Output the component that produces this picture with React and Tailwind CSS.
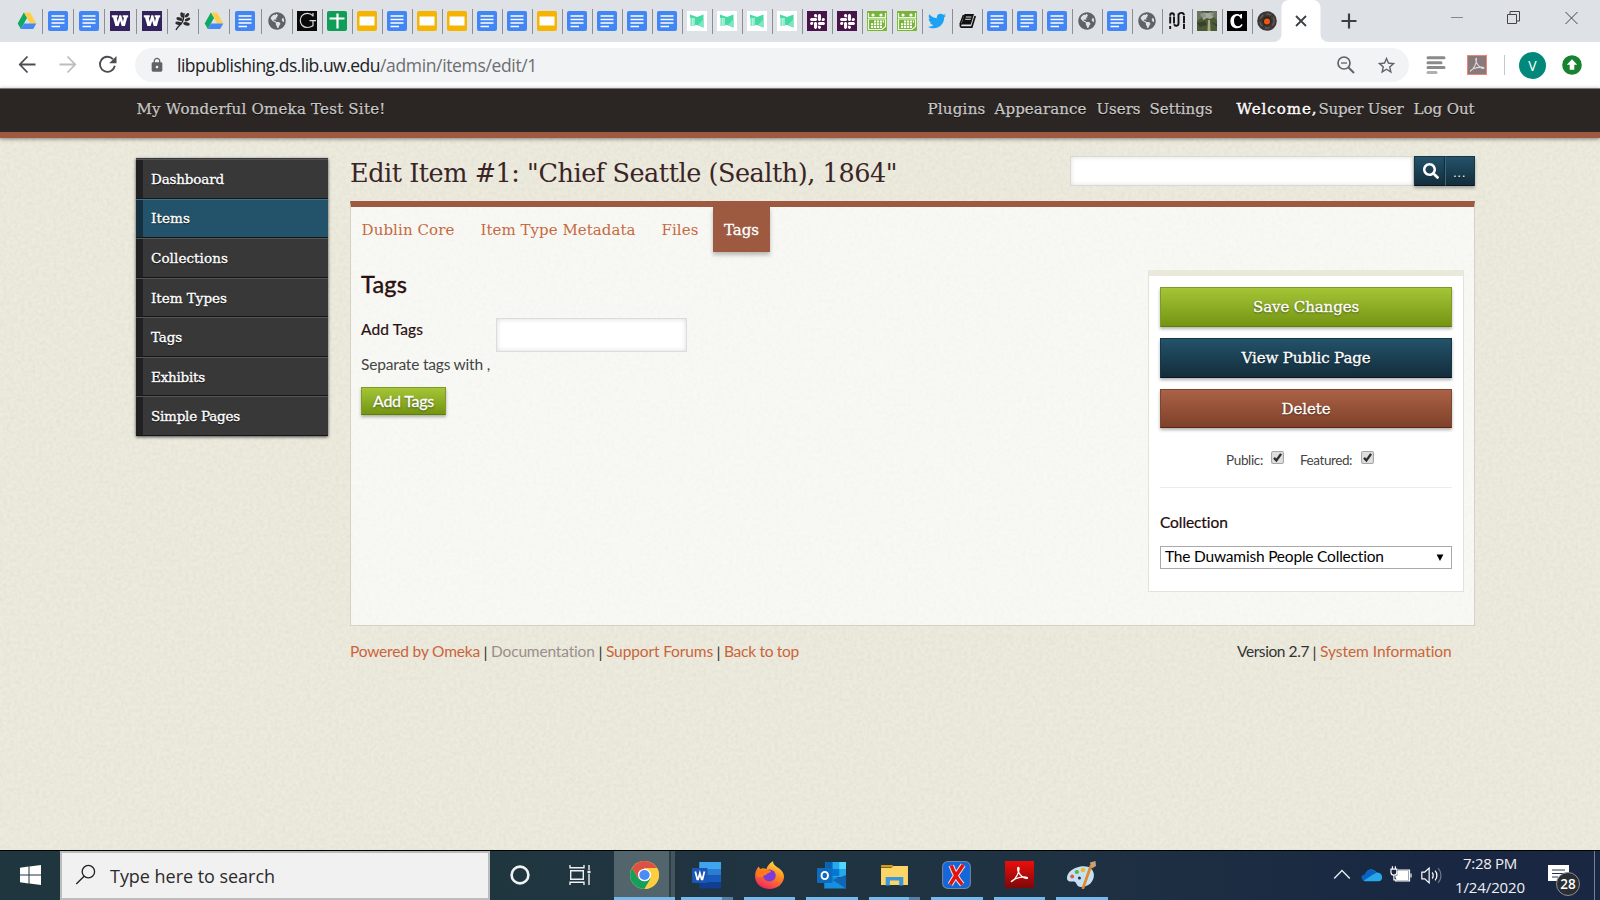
import { useLayoutEffect, useRef, useState } from "react";
import { FaTwitter, FaSlack, FaSearch, FaGlobeAmericas } from "react-icons/fa";
import { MdLock, MdStarBorder } from "react-icons/md";

const SLAB = "font-['DejaVu_Serif',serif]";
const CABIN = "font-['Lato',sans-serif]";
const SEGOE = "font-['Open_Sans','Noto_Sans',sans-serif]";

/* One line of text, tracked so that it fills the width w. */
function Fit({ w, className = "", children }) {
  const ref = useRef(null);
  const [ls, setLs] = useState(0);
  useLayoutEffect(() => {
    const natural = ref.current.getBoundingClientRect().width;
    setLs((w - natural) / String(children).length);
  }, [w, children]);
  return (
    <span className={"block shrink-0 whitespace-pre " + className} style={{ width: w }}>
      <span ref={ref} className="inline-block" style={{ letterSpacing: ls + "px" }}>
        {children}
      </span>
    </span>
  );
}

function Grain({ id, opacity }) {
  return (
    <svg className="pointer-events-none absolute inset-0 h-full w-full" style={{ opacity }}>
      <filter id={id}>
        <feTurbulence type="fractalNoise" baseFrequency="0.28" numOctaves="3" seed="4" />
        <feColorMatrix values="0 0 0 0 0.4  0 0 0 0 0.36  0 0 0 0 0.25  1.6 0 0 0 -0.5" />
      </filter>
      <rect width="100%" height="100%" filter={`url(#${id})`} />
    </svg>
  );
}

/* ---------- favicons ---------- */
const Ico = ({ children }) => (
  <svg viewBox="0 0 20 20" className="block h-5 w-5 shrink-0">
    {children}
  </svg>
);

const favicons = {
  drive: (
    <Ico>
      <path d="M6.8 1.5H13l6.3 11h-6.2z" fill="#ffcf48" />
      <path d="M6.8 1.5 10 7 3.8 18 .7 12.500z" fill="#11a861" />
      <path d="M7 12.500h12.300L16.200 18H3.800z" fill="#4688f4" />
    </Ico>
  ),
  docs: (
    <Ico>
      <rect width="20" height="20" rx="2" fill="#4285f4" />
      <path d="M3.500 5h13M3.500 8.500h13M3.500 12h13M3.500 15.500h8.500" stroke="#fff" strokeWidth="1.700" />
    </Ico>
  ),
  w: (
    <Ico>
      <rect width="20" height="20" fill="#32235c" />
      <path
        d="M1.800 4.300h6v2L6.800 6.500l.9 4.300 1.600-6.500h2l1.700 6.500.9-4.300-1.200-.2v-2h5.500v2l-1 .2L14.900 15h-3.200l-1.500-5.200L8.700 15H5.400L3 6.500l-1.200-.2z"
        fill="#fff"
      />
    </Ico>
  ),
  branch: (
    <Ico>
      <path d="M3 19c1-3 3-4 5-6 2.500-3 3-7 3-11" stroke="#222" strokeWidth="1.300" fill="none" />
      <g fill="#2c2c2c">
        <ellipse cx="9" cy="4" rx="1.600" ry="2.900" transform="rotate(-15 9 4)" />
        <ellipse cx="14" cy="4.300" rx="1.500" ry="2.700" transform="rotate(50 14 4.300)" />
        <ellipse cx="6.500" cy="8" rx="1.600" ry="3.200" transform="rotate(-70 6.500 8)" />
        <ellipse cx="14.500" cy="8.500" rx="1.500" ry="3" transform="rotate(65 14.500 8.500)" />
        <ellipse cx="5.500" cy="12.300" rx="1.600" ry="3.200" transform="rotate(-80 5.500 12.300)" />
        <ellipse cx="13.500" cy="12.800" rx="1.700" ry="3.300" transform="rotate(-78 13.500 12.800)" />
      </g>
    </Ico>
  ),
  globe: <FaGlobeAmericas className="h-[18px] w-[18px] text-[#5f6368]" />,
  g: (
    <Ico>
      <rect width="20" height="20" fill="#0a0a0a" />
      <path d="M16 5.500V2M16 5C14.500 3 12.500 2.300 10.500 2.300 6 2.300 3.300 5.500 3.300 9.500s2.800 7 7 7c2.200 0 4-.6 5.700-1.700v-5M12.500 9.700H19" stroke="#ddd" strokeWidth="1.200" fill="none" />
    </Ico>
  ),
  sheets: (
    <Ico>
      <rect width="20" height="20" rx="2" fill="#0f9d58" />
      <path d="M10.500 2.500v15M2.500 7.500h15" stroke="#fff" strokeWidth="2.200" />
    </Ico>
  ),
  slides: (
    <Ico>
      <rect width="20" height="20" rx="2" fill="#f4b400" />
      <rect x="2.500" y="5.500" width="15" height="9" fill="#fff" />
    </Ico>
  ),
  mint: (
    <Ico>
      <rect width="20" height="20" fill="#fff" />
      <path d="M3 3.500 10 6l6.500-2.500v13L10 14l-7 .5z" fill="#46dba5" />
      <path d="M3 7h5v8l-5-.5z" fill="#b4f0da" />
      <path d="M4.500 6.500v8M7 6.500v8.500" stroke="#74e3bb" strokeWidth=".9" />
      <path d="M11 14l5.500-6v8.500z" fill="#7fe6c1" />
    </Ico>
  ),
  slack: (
    <span className="flex h-5 w-5 shrink-0 items-center justify-center bg-[#481449] text-white">
      <FaSlack className="h-[17px] w-[17px]" />
    </span>
  ),
  cal: (
    <Ico>
      <rect width="20" height="20" rx="1" fill="#77b436" />
      <path d="M1.500 2v4.500h17V2" stroke="#eef8e0" strokeWidth="1.200" fill="none" />
      <circle cx="6" cy="4" r="1.600" fill="#fff" />
      <circle cx="14" cy="4" r="1.600" fill="#fff" />
      <path d="M1.500 8v10.500h13.500l3.500-3V8z" stroke="#eef8e0" strokeWidth="1.200" fill="none" />
      <path d="M7 10.500h10M4 13.300h11M4 16h11" stroke="#fff" strokeWidth="2" strokeDasharray="2.200 .8" />
    </Ico>
  ),
  twitter: <FaTwitter className="h-[18px] w-[18px] text-[#1da1f2]" />,
  book: (
    <Ico>
      <path d="M7.500 3h9.500l-3.200 10.500H4.300z" fill="#111" />
      <path d="M4.800 12.500c-2 .5-1.800 3.500-.3 3.700h10.300L18.200 5" fill="none" stroke="#111" strokeWidth="1.700" />
      <path d="M6.500 4 3 13.500" fill="none" stroke="#111" strokeWidth="1.600" />
      <path d="M8.800 6h5.600M8.200 8.300h5.600" stroke="#ddd" strokeWidth="1" />
    </Ico>
  ),
  m: (
    <Ico>
      <path d="M3.200 18v-3M3.200 12.500V4.500C3.200 1.500 7 1.500 7 4.500v8c0 3 4.500 3 4.500 0v-8c0-3.500 5.500-3.500 5.500 0V18M11.500 2.500v10" stroke="#111" strokeWidth="1.900" fill="none" strokeDasharray="7 .7" />
    </Ico>
  ),
  photo: (
    <Ico>
      <rect width="20" height="20" fill="#4d5a36" />
      <path d="M5 2h9l3 4-4 2-3-1-4 2z" fill="#a3aa9f" />
      <path d="M0 0h5L4 7 0 10zM15 0h5v9l-4-4z" fill="#6c7560" />
      <path d="M3 3 8 1 9 6 5 7zM12 1l5 1-2 4z" fill="#8d968a" />
      <path d="M11 9h2l.5 11h-3z" fill="#a9ab80" />
      <path d="M0 12l8-2 2 4-7 2zM14 11l6 2v3z" fill="#35432a" />
    </Ico>
  ),
  c: (
    <Ico>
      <rect width="20" height="20" fill="#000" />
      <path d="M15 3v4.500h-1.500C13 5.500 12 4.700 10.500 4.700 8 4.700 7 7 7 10s1.300 5.200 3.700 5.200c1.700 0 2.800-.7 3.800-2.200l1.200.8C14.500 16.300 12.700 17.300 10 17.300 6 17.300 3.400 14.500 3.400 10.200 3.400 5.800 6.200 2.900 9.700 2.900c1.500 0 2.600.4 3.500 1.100L13.700 3z" fill="#fff" />
    </Ico>
  ),
  vinyl: (
    <Ico>
      <circle cx="10" cy="10" r="9.800" fill="#3c3735" />
      <circle cx="10" cy="10" r="7" fill="none" stroke="#5f5a57" strokeWidth="1.500" strokeDasharray="5 3" />
      <circle cx="10" cy="10" r="4.500" fill="#2a2624" />
      <circle cx="10" cy="10.500" r="3" fill="#f0560f" />
    </Ico>
  ),
};

const wideTabs = ["drive", "docs", "docs", "w", "w", "branch", "drive", "docs", "globe"];
const tabs = [
  "g", "sheets", "slides", "docs", "slides", "slides", "docs", "docs", "slides",
  "docs", "docs", "docs", "docs", "mint", "mint", "mint", "mint", "slack", "slack",
  "cal", "cal", "twitter", "book", "docs", "docs", "docs", "globe", "docs", "globe",
  "m", "photo", "c", "vinyl",
];

function TabStrip() {
  return (
    <div className="flex h-[42px] bg-[#dee1e6] pl-[11.500px]">
      {wideTabs.map((t, i) => (
        <div key={i} className="flex h-[42px] w-[31.25px] shrink-0 items-center">
          <div className="flex w-[30px] grow justify-center">{favicons[t]}</div>
          <div className="h-[25px] w-px bg-[#8b8e93]" />
        </div>
      ))}
      {tabs.map((t, i) => (
        <div key={i} className="flex h-[42px] w-[30px] shrink-0 items-center">
          <div className="flex grow justify-center">{favicons[t]}</div>
          <div className={i === tabs.length - 1 ? "h-[25px] w-px" : "h-[25px] w-px bg-[#8b8e93]"} />
        </div>
      ))}
      <svg className="-ml-[9.500px] h-[42px] w-[56px] shrink-0" viewBox="0 0 56 42">
        <path d="M0 42c5 0 8.500-3 8.500-8V8c0-5 3-8 8-8h23c5 0 8 3 8 8v26c0 5 3.500 8 8.500 8z" fill="#fff" />
        <path d="m23 16 10 10m0-10L23 26" stroke="#3c4043" strokeWidth="1.800" />
      </svg>
      <svg className="ml-[11px] h-[42px] w-[18px] shrink-0" viewBox="0 0 18 42">
        <path d="M9 13.500v15M1.500 21h15" stroke="#3c4043" strokeWidth="2.200" />
      </svg>
      <svg className="ml-auto h-[42px] w-[160px] shrink-0" viewBox="0 0 160 42" fill="none" stroke="#444" strokeWidth="1">
        <path d="M11 17.500h12" stroke="#888" />
        <path d="M67.500 14.500h9v9h-9zM70 14v-2.500h9.500v9.500H77" />
        <path d="m125.500 12 12 12m0-12-12 12" />
      </svg>
    </div>
  );
}

function Toolbar() {
  return (
    <div className="flex h-[46px] items-center bg-white">
      <svg className="h-[46px] w-[135px] shrink-0" viewBox="0 0 135 46" fill="none">
        <path d="M35.500 22.500H20M27.500 14.500l-7.700 8 7.700 8" stroke="#4a4d51" strokeWidth="1.800" />
        <path d="M59.500 22.500H75M67.500 14.500l7.700 8-7.700 8" stroke="#bcbec1" strokeWidth="1.800" />
        <path d="M113 17.200a7.500 7.500 0 1 0 1.800 6.600" stroke="#4a4d51" strokeWidth="1.800" />
        <path d="M116.500 14v7.300h-7.300z" fill="#4a4d51" />
      </svg>
      <div className="flex h-[34px] w-[1274px] shrink-0 items-center rounded-full bg-[#f1f3f4] pl-[14px]">
        <MdLock className="h-4 w-4 shrink-0 text-[#5f6368]" />
        <Fit w={203} className={"ml-[12px] text-[17.500px] leading-[34px] text-[#202124] " + SEGOE}>
          libpublishing.ds.lib.uw.edu
        </Fit>
        <Fit w={157} className={"text-[17.500px] leading-[34px] text-[#6b6e72] " + SEGOE}>
          /admin/items/edit/1
        </Fit>
        <svg className="ml-[799px] h-5 w-5 shrink-0" viewBox="0 0 20 20" fill="none" stroke="#5f6368" strokeWidth="1.700">
          <circle cx="8" cy="8" r="6" />
          <path d="m12.500 12.500 5.500 5.500" strokeWidth="2" />
          <path d="M5 8h6" strokeWidth="1.300" />
        </svg>
        <MdStarBorder className="ml-[20px] h-[21px] w-[21px] shrink-0 text-[#5f6368]" />
      </div>
      <svg className="ml-[17px] h-5 w-5 shrink-0" viewBox="0 0 20 20" stroke="#8a8a8a" strokeWidth="3" strokeLinecap="round">
        <path d="M2 2.700h16M2 7.700h13M2 12.500h16" />
        <path d="M2 17.500h8" stroke="#b0b0b0" />
      </svg>
      <svg className="ml-[21px] h-5 w-5 shrink-0" viewBox="0 0 20 20" fill="none">
        <rect x=".5" y=".5" width="19" height="19" fill="#88797a" stroke="#f08474" />
        <path d="M3.500 16c3-1.500 6.500-7.500 6-12.500C8.500 3 8.500 5.500 10 8.500c1.500 3 5 5.500 7 4.800.5-1.800-6-1.500-10 .2-3 1.300-4 3-3.500 2.500z" stroke="#e2d9d9" strokeWidth="1.100" />
      </svg>
      <div className="ml-[17px] h-5 w-px bg-[#c4c7cb]" />
      <div className={"ml-[14px] flex h-[27px] w-[27px] items-center justify-center rounded-full bg-[#00897b] text-[14px] text-white " + SEGOE}>
        V
      </div>
      <svg className="ml-[16px] h-5 w-5 shrink-0" viewBox="0 0 20 20">
        <circle cx="10" cy="10" r="9.800" fill="#178230" />
        <path d="m10 4.300 5.200 5.500h-2.900v5H7.700v-5H4.800z" fill="#fff" />
      </svg>
    </div>
  );
}

function SiteHeader() {
  const link = "text-[15px] leading-[41px] text-[#c9c7c5] [-webkit-text-stroke:0.25px_#c9c7c5] " + SLAB;
  return (
    <header className="relative z-10 flex h-[50px] items-start border-t border-b-[6px] border-t-[#77797c] border-b-[#9e5a41] bg-[#2b2623] pl-[136.500px] shadow-[0_1px_4px_rgba(0,0,0,0.45)] [text-shadow:0_1px_0_#000]">
      <Fit w={249} className={link}>My Wonderful Omeka Test Site!</Fit>
      <Fit w={58} className={"ml-[542px] " + link}>Plugins</Fit>
      <Fit w={92} className={"ml-[9px] " + link}>Appearance</Fit>
      <Fit w={44} className={"ml-[10px] " + link}>Users</Fit>
      <Fit w={63} className={"ml-[9px] " + link}>Settings</Fit>
      <Fit w={81} className={"ml-[24px] text-[15px] leading-[41px] text-white [-webkit-text-stroke:0.4px_#fff] " + SLAB}>Welcome,</Fit>
      <Fit w={85} className={"ml-[1px] " + link}>Super User</Fit>
      <Fit w={61} className={"ml-[10px] " + link}>Log Out</Fit>
    </header>
  );
}

const nav = [
  ["Dashboard", 73],
  ["Items", 39],
  ["Collections", 77],
  ["Item Types", 76],
  ["Tags", 31],
  ["Exhibits", 54],
  ["Simple Pages", 89],
];

function Sidebar() {
  return (
    <nav className="mt-[20px] flex h-[278px] w-[192px] shrink-0 flex-col bg-[#383838] pt-px shadow-[0_1px_3px_rgba(0,0,0,0.7)]">
      {nav.map(([label, w]) => (
        <div
          key={label}
          className={
            "flex min-h-0 flex-1 items-center border-t border-b border-b-[#161616] " +
            (label === "Items" ? "border-t-[#3f7188] bg-[#23536a]" : "border-t-[#555] bg-[#383838]")
          }
        >
          <div className="h-full w-[7px] bg-black/40" />
          <Fit
            w={w}
            className={"ml-[8px] text-[13.500px] leading-[20px] text-white [-webkit-text-stroke:0.35px_#fff] [text-shadow:0_1px_1px_#000] " + SLAB}
          >
            {label}
          </Fit>
        </div>
      ))}
    </nav>
  );
}

const BTN = "flex items-center justify-center border text-white [text-shadow:0_1px_2px_rgba(0,0,0,0.55)] shadow-[0_2px_3px_rgba(0,0,0,0.3)] bg-linear-to-b ";
const GREEN = "from-[#a5c536] to-[#749510] border-[#7f9a2a] border-b-[#5f7d08] ";
const BLUE = "from-[#23536b] to-[#132d3b] border-[#173646] border-b-[#081722] ";
const RED = "from-[#ab6246] to-[#7f412a] border-[#7c4636] border-b-[#5b2414] ";

function CheckBox() {
  return (
    <svg className="h-[13px] w-[13px] shrink-0" viewBox="0 0 12 12">
      <rect x=".5" y=".5" width="11" height="11" rx="1.500" fill="#dedede" stroke="#a5a5a5" />
      <path d="m2.800 6.300 2.200 2.400 4.300-6" fill="none" stroke="#2e2e2e" strokeWidth="2.200" />
    </svg>
  );
}

function SavePanel() {
  const big = "text-[15px] leading-[20px] [-webkit-text-stroke:0.3px_#fff] " + SLAB;
  return (
    <aside className="mt-[17px] mr-[10px] h-[322px] w-[316px] shrink-0 border border-[#e3e3da] border-t-[6px] border-t-[#eae9dc] bg-white px-[11px] pt-[11px]">
      <button className={"h-[40px] w-full " + BTN + GREEN}><Fit w={106} className={big}>Save Changes</Fit></button>
      <button className={"mt-[11px] h-[40px] w-full " + BTN + BLUE}><Fit w={129} className={big}>View Public Page</Fit></button>
      <button className={"mt-[11px] h-[39px] w-full " + BTN + RED}><Fit w={49} className={big}>Delete</Fit></button>
      <div className="mt-[22px] flex h-[38px] items-start border-b border-[#ececec] pl-[66px]">
        <Fit w={37} className={"pt-px text-[13.500px] leading-[19px] text-[#444] " + CABIN}>Public:</Fit>
        <span className="ml-[8px] pt-px"><CheckBox /></span>
        <Fit w={52} className={"ml-[16px] pt-px text-[13.500px] leading-[19px] text-[#444] " + CABIN}>Featured:</Fit>
        <span className="ml-[9px] pt-px"><CheckBox /></span>
      </div>
      <Fit w={68} className={"mt-[23px] text-[15.500px] leading-[22px] text-[#1c0b0b] [-webkit-text-stroke:0.2px_#1c0b0b] " + CABIN}>Collection</Fit>
      <div className="mt-[13px] flex h-[23px] items-center border border-[#a9a9a9] bg-white pl-[4px]">
        <Fit w={219} className={"pb-[3px] text-[15.500px] leading-[20px] text-black " + CABIN}>The Duwamish People Collection</Fit>
        <svg className="ml-auto mr-[7px] h-2 w-2" viewBox="0 0 8 8"><path d="M.6 .5h6.800L4 7z" fill="#000" /></svg>
      </div>
    </aside>
  );
}

function ItemPage() {
  const tab = "text-[15px] leading-[46px] text-[#c76941] " + SLAB;
  const foot = "text-[15.500px] leading-[21px] ";
  return (
    <main className="ml-[22px] w-[1125px] shrink-0">
      <div className="flex h-[63px] items-start">
        <Fit w={547} className={"mt-[17px] text-[25.500px] leading-[36px] text-[#3a2426] " + SLAB}>
          {'Edit Item #1: "Chief Seattle (Sealth), 1864"'}
        </Fit>
        <div className="ml-auto mt-[18px] flex h-[30px] w-[405px]">
          <div className="w-[344px] border border-[#d9d9d3] bg-white shadow-[inset_0_0_5px_rgba(0,0,0,0.13)]" />
          <div className={"w-[31px] pl-[2px] " + BTN + BLUE}><FaSearch className="h-4 w-4" /></div>
          <div className={"w-[30px] border-l-[#3d6579] text-[12px] leading-none " + BTN + BLUE + CABIN}><Fit w={13} className="pt-[4px]">...</Fit></div>
        </div>
      </div>
      <section className="relative h-[425px] border border-[#d2d2c6] border-t-[6px] border-t-[#9e5a41] bg-[#f8f9f5]">
        <Grain id="panelGrain" opacity={0.05} />
        <div className="relative">
          <div className="flex h-[46px] pl-[10.500px]">
            <Fit w={93} className={tab}>Dublin Core</Fit>
            <Fit w={155} className={"ml-[26px] " + tab}>Item Type Metadata</Fit>
            <Fit w={37} className={"ml-[26px] " + tab}>Files</Fit>
            <div className="ml-[14.500px] h-[45px] w-[57px] bg-[#9e5a41] pl-[11px] shadow-[0_3px_4px_rgba(0,0,0,0.25)]">
              <Fit w={35} className={"text-[15px] leading-[46px] text-white [-webkit-text-stroke:0.3px_#fff] " + SLAB}>Tags</Fit>
            </div>
          </div>
          <div className="flex justify-between">
            <div className={"pl-[10px] text-[#2a0f10] " + CABIN}>
              <Fit w={46} className="mt-[15px] text-[23.500px] leading-[32px] [-webkit-text-stroke:0.4px_#2a0f10]">Tags</Fit>
              <div className="mt-[18px] flex h-[34px] items-start">
                <Fit w={62} className="text-[15.500px] leading-[22px] [-webkit-text-stroke:0.2px_#2a0f10]">Add Tags</Fit>
                <div className="ml-[73px] h-[34px] w-[191px] border border-[#dcdcda] bg-white shadow-[inset_0_0_5px_rgba(0,0,0,0.15)]" />
              </div>
              <Fit w={129} className="mt-px text-[15.500px] leading-[22px] text-[#444]">Separate tags with ,</Fit>
              <button className={"mt-[12px] h-[28px] w-[85px] " + BTN + GREEN}>
                <Fit w={61} className="text-[16px] leading-none [-webkit-text-stroke:0.3px_#fff]">Add Tags</Fit>
              </button>
            </div>
            <SavePanel />
          </div>
        </div>
      </section>
      <footer className={"mt-[15px] flex pr-[23px] text-[#c9643a] " + CABIN}>
        <Fit w={130} className={foot}>Powered by Omeka</Fit>
        <Bar />
        <Fit w={104} className={foot + "text-[#998e8b]"}>Documentation</Fit>
        <Bar />
        <Fit w={107} className={foot}>Support Forums</Fit>
        <Bar />
        <Fit w={75} className={foot}>Back to top</Fit>
        <Fit w={72} className={"ml-auto text-[#333] " + foot}>Version 2.7</Fit>
        <Bar />
        <Fit w={132} className={foot}>System Information</Fit>
      </footer>
    </main>
  );
}

const Bar = () => <span className="w-[11px] text-center text-[16px] leading-[21px] text-[#333]">|</span>;

/* ---------- taskbar icons ---------- */
const App28 = ({ children }) => (
  <svg viewBox="0 0 28 28" className="h-7 w-[29px]" preserveAspectRatio="none">{children}</svg>
);

const apps = [
  {
    key: "chrome",
    icon: (
      <App28>
        <circle cx="14" cy="14" r="14" fill="#ffcd40" />
        <path d="M1.900 7A14 14 0 0 1 26.100 7H14l-6 10.500z" fill="#dd5144" />
        <path d="M1.900 7A14 14 0 0 0 14 28l6-10.500-12 0z" fill="#159f5c" />
        <path d="M26.100 7A14 14 0 0 1 14 28l6-10.500V7z" fill="#ffcd40" />
        <circle cx="14" cy="14" r="6.300" fill="#fff" />
        <circle cx="14" cy="14" r="5" fill="#4c8bf5" />
      </App28>
    ),
  },
  {
    key: "word",
    stacked: true,
    icon: (
      <App28>
        <path d="M7 1h21v7H7z" fill="#41a5ee" />
        <path d="M7 8h21v6.500H7z" fill="#2b7cd3" />
        <path d="M7 14.500h21V21H7z" fill="#185abd" />
        <path d="M7 21h21v6.500H7z" fill="#103f91" />
        <rect y="7" width="15" height="15" rx="1" fill="#1a56b4" />
        <path d="m3.200 10.500 1.900 8h.8l1.700-6.500 1.700 6.500h.8l1.900-8" fill="none" stroke="#fff" strokeWidth="1.700" />
      </App28>
    ),
  },
  {
    key: "firefox",
    icon: (
      <App28>
        <defs>
          <linearGradient id="ff" x1=".8" y1="0" x2=".3" y2="1">
            <stop offset="0" stopColor="#ffe844" />
            <stop offset=".45" stopColor="#ff8a1f" />
            <stop offset="1" stopColor="#f0245e" />
          </linearGradient>
        </defs>
        <path d="M14 28C6 28 0 22.500 0 15c0-4 1.500-7 3.500-9.500L5 8c2-1 4-1 6 0 1-3 3-6 6.500-8-.3 3 1.500 4 3 5.500C26 9 28 12 28 16c-.5 7-6.500 12-14 12z" fill="url(#ff)" />
        <circle cx="14" cy="14.500" r="6" fill="#7a3bd8" />
        <path d="M1 12c3-3 6-4 10-3.500 2 1 4 .5 4.500 2-1 1.500-4 1.500-5 3.500-3 0-4 3-8 2z" fill="#ff7a1a" />
      </App28>
    ),
  },
  {
    key: "outlook",
    icon: (
      <App28>
        <path d="M8 1h20v15H8z" fill="#28a8ea" />
        <path d="M8 1h7v14H8z" fill="#0364b8" />
        <path d="M15 8h6.500v7H15z" fill="#0078d4" />
        <path d="M21.500 1H28v7h-6.500z" fill="#50d9ff" />
        <path d="M7 14l21 4v9.500H7z" fill="#1490df" />
        <path d="M28 14v13.500L15 19z" fill="#1066b5" />
        <rect y="7" width="15" height="15" rx="1" fill="#0f6cbd" />
        <ellipse cx="7.500" cy="14.500" rx="3.100" ry="3.600" fill="none" stroke="#fff" strokeWidth="1.900" />
      </App28>
    ),
  },
  {
    key: "explorer",
    stacked: true,
    icon: (
      <App28>
        <path d="M1 4h11l1.500 2.500H1z" fill="#d99a10" />
        <path d="M1 7h10l2-2h14v19H1z" fill="#fbd667" />
        <path d="M5.500 24.500V16h17v8.500h-4v-5h-9v5z" fill="#3a96dd" />
      </App28>
    ),
  },
  {
    key: "oxygen",
    icon: (
      <App28>
        <rect x=".6" y=".6" width="26.800" height="26.800" rx="5" fill="#1467d8" stroke="#74879d" />
        <path d="M9 4.500c2 6 5 12.500 10.500 19M20.500 4c-4 6-8.500 12-12.500 19.500" stroke="#f4dedd" strokeWidth="5.400" fill="none" />
        <path d="M9 4.500c2 6 5 12.500 10.500 19M20.500 4c-4 6-8.500 12-12.500 19.500" stroke="#e3120f" strokeWidth="3.400" fill="none" />
      </App28>
    ),
  },
  {
    key: "acrobat",
    icon: (
      <App28>
        <defs>
          <linearGradient id="ac" x1="0" y1="0" x2="0" y2="1">
            <stop offset="0" stopColor="#ee0d0d" />
            <stop offset="1" stopColor="#7d0808" />
          </linearGradient>
        </defs>
        <rect width="28" height="27" fill="url(#ac)" />
        <path d="M6.500 20.500c3.500-2 7.500-9 7-13.500-1-1.500-2 .5-.5 4 1.500 3.500 5.500 7 8.500 6.300 1-1.800-6-1.800-10.500.2-4 1.500-5.500 3.500-4.500 3z" fill="none" stroke="#fff" strokeWidth="1.300" />
      </App28>
    ),
  },
  {
    key: "paint",
    icon: (
      <App28>
        <path d="M13 5.500c7-1.500 13 2 13 8.500 0 7-5.500 12-12.500 12-4.500 0-4-5-6.500-5.500-3-.3-6 1-7-2.500C-.5 12 5 7 13 5.500z" fill="#c4e0f2" />
        <circle cx="5" cy="15.500" r="1.900" fill="#e25b4a" />
        <circle cx="9.500" cy="11" r="2.100" fill="#62b04a" />
        <circle cx="15.500" cy="9" r="2.200" fill="#f0b928" />
        <circle cx="12" cy="17" r="1.500" fill="#24363e" />
        <path d="M23 5 15.500 27" stroke="#e08a2c" strokeWidth="2.600" strokeLinecap="round" />
        <path d="M22 1.500 27.500 0 28 5l-4 2.500z" fill="#c79f78" />
      </App28>
    ),
  },
];

function Taskbar() {
  return (
    <div className="flex h-[50px] border-t border-black bg-linear-to-r from-[#20363f] from-30% via-[#1f3242] via-65% to-[#192742] to-90%">
      <div className="flex w-[60px] items-center justify-center pb-[2px]">
        <svg className="h-5 w-[21px]" viewBox="0 0 21 20" fill="#fff">
          <path d="M0 2.800 8.500 1.600v7.900H0zM9.500 1.400 21 0v9.500H9.500zM0 10.500h8.500v7.900L0 17.200zM9.500 10.500H21V20L9.500 18.600z" />
        </svg>
      </div>
      <div className="flex h-[49px] w-[430px] items-center border-2 border-[#bcbcbc] bg-[#f1f1f1] pl-[13px]">
        <svg className="-mt-[3px] h-[21px] w-[22px]" viewBox="0 0 22 22" fill="none" stroke="#222" strokeWidth="1.400">
          <circle cx="13.500" cy="8" r="6.500" />
          <path d="M9 12.800.8 21" />
        </svg>
        <Fit w={165} className={"ml-[13px] text-[18px] leading-[24px] text-[#2b2b2b] " + SEGOE}>Type here to search</Fit>
      </div>
      <div className="flex w-[124px] items-center pb-[2px]">
        <svg className="ml-[20px] h-5 w-5" viewBox="0 0 20 20"><circle cx="10" cy="10" r="8.400" fill="none" stroke="#f0f2f3" strokeWidth="2.600" /></svg>
        <svg className="ml-[39px] h-5 w-[22px]" viewBox="0 0 22 20" fill="none" stroke="#eef0f1" strokeWidth="1.400">
          <path d="M1 0v2.700h14V0M1 20v-2.700h14V20M1.700 5.700h12.600v8.600H1.700zM20 0v5M20 9v11" />
          <path d="M18.500 7h3" strokeWidth="2.500" />
        </svg>
      </div>
      {apps.map((a, i) => (
        <div
          key={a.key}
          className={"flex h-[49px] flex-col " + (i === 0 ? "w-[67px] pr-[6px]" : "w-[62.500px] pr-[11px]")}
        >
          <div className={"flex h-[46px] " + (i === 0 ? "bg-[#53656c]" : "")}>
            <div className={"flex grow items-center pt-[2px] " + (i === 0 ? "pl-[16px]" : "pl-[11px]")}>{a.icon}</div>
            {i === 0 && <div className="w-[6px] border-l-2 border-[#2c3f47] bg-[#43565e]" />}
          </div>
          <div className="flex h-[3px]">
            <div className="grow bg-[#76b9ed]" />
            {a.stacked && <div className="w-[11px] bg-[#5580a3]" />}
          </div>
        </div>
      ))}
      <svg className="ml-auto h-[49px] w-[120px] shrink-0 pb-px" viewBox="0 0 120 49" fill="none">
        <path d="m4 28 8-8 8 8" stroke="#e4e8ee" strokeWidth="1.500" />
        <path d="M37 31c-5 0-5.500-6-1-6.800C37 18.500 44 17 47.500 22c3.500-.3 5.500 2 5.500 4.800 0 2.500-1.500 4.200-4 4.200z" fill="#28a8ea" />
        <path d="M34.500 30c-4-1.500-3-5.500.8-5.900C36.500 18.500 44 17 47.500 22L43 24.500z" fill="#0a63c0" />
        <path d="M68.500 20.500H80v9H66.500v-4.500h2z" fill="#fff" />
        <path d="M69 19.500h12v11H66M82.500 23v4" stroke="#fff" strokeWidth="1.100" />
        <path d="M62 18.500h6v3.200c0 2-1 3-3 3s-3-1-3-3zM63.500 18v-2.500M66.500 18v-2.500M65 25v4.500h3" stroke="#fff" strokeWidth="1.200" fill="#1b2942" />
        <path d="M93.500 21.500h3l4.500-4v15l-4.500-4h-3z" stroke="#fff" strokeWidth="1.200" />
        <path d="M104 22c1.500 1.500 1.500 4.500 0 6M107 20c2.500 2.500 2.500 7.500 0 10" stroke="#fff" strokeWidth="1.300" />
        <path d="M110 17.500c4 4 4 11 0 15" stroke="#6c7788" strokeWidth="1.200" />
      </svg>
      <div className={"ml-[6px] flex w-[70px] flex-col items-center text-[15px] leading-[24px] text-[#f0f1f3] " + SEGOE}>
        <Fit w={54}>7:28 PM</Fit>
        <Fit w={70}>1/24/2020</Fit>
      </div>
      <div className="relative ml-[23px] w-[46px]">
        <svg className="mt-[14px] h-5 w-[21px]" viewBox="0 0 21 20">
          <path d="M0 0h21v16h-8l-4 4v-4H0z" fill="#fff" />
          <path d="M4 5h13M4 8.500h13M4 12h6" stroke="#26344c" strokeWidth="1" />
        </svg>
        <div className={"absolute left-[8px] top-[21px] flex h-6 w-6 items-center justify-center rounded-full border border-[#8a8f96] bg-[#2b2e33] text-[13.500px] font-semibold text-white " + SEGOE}>
          28
        </div>
      </div>
      <div className="mr-[5px] w-px bg-[#76808f]" />
    </div>
  );
}

export default function App() {
  return (
    <div className="flex h-[900px] w-[1600px] flex-col overflow-hidden">
      <TabStrip />
      <Toolbar />
      <SiteHeader />
      <div className="relative h-[712px] bg-[#ecebde]">
        <Grain id="pageGrain" opacity={0.12} />
        <div className="relative flex pl-[136px]">
          <Sidebar />
          <ItemPage />
        </div>
      </div>
      <Taskbar />
    </div>
  );
}
